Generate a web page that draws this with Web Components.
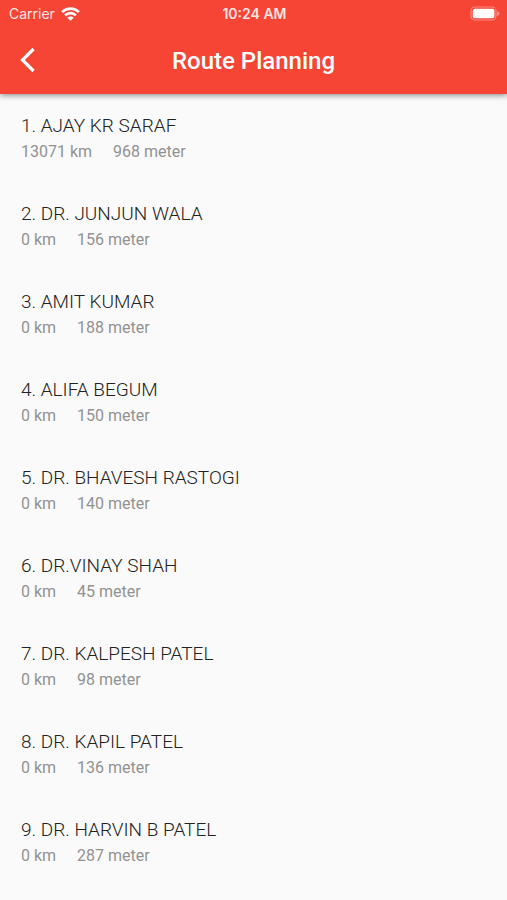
<!DOCTYPE html>
<html lang="en">
<head>
  <meta charset="utf-8">
  <meta name="viewport" content="width=device-width, initial-scale=1">
  <title>Route Planning</title>
  <style>
    body {
      margin: 0;
      background: #fafafa;
      font-family: Roboto, "Liberation Sans", sans-serif;
    }
  </style>
</head>
<body>
  <route-app>
    <status-bar slot="header" carrier="Carrier" time="10:24 AM"></status-bar>
    <nav-bar slot="header">Route Planning</nav-bar>
    <route-stop km="13071" meter="968">1. AJAY KR SARAF</route-stop>
    <route-stop km="0" meter="156">2. DR. JUNJUN WALA</route-stop>
    <route-stop km="0" meter="188">3. AMIT KUMAR</route-stop>
    <route-stop km="0" meter="150">4. ALIFA BEGUM</route-stop>
    <route-stop km="0" meter="140">5. DR. BHAVESH RASTOGI</route-stop>
    <route-stop km="0" meter="45">6. DR.VINAY SHAH</route-stop>
    <route-stop km="0" meter="98">7. DR. KALPESH PATEL</route-stop>
    <route-stop km="0" meter="136">8. DR. KAPIL PATEL</route-stop>
    <route-stop km="0" meter="287">9. DR. HARVIN B PATEL</route-stop>
  </route-app>

  <script>
    const appTemplate = document.createElement('template');
    appTemplate.innerHTML = `
      <style>
      :host {
        display: block;
      }
      header {
        background: #f64435;
        color: #fff;
        box-shadow: 0 1px 6px rgba(0, 0, 0, 0.5);
      }
      main {
        padding: 19px 21px 0;
      }
      </style>
      <header><slot name='header'></slot></header>
      <main><slot></slot></main>
    `;

    class RouteApp extends HTMLElement {
      constructor() {
        super();
        this.attachShadow({ mode: 'open' });
        this.shadowRoot.appendChild(appTemplate.content.cloneNode(true));
      }
    }

    const statusTemplate = document.createElement('template');
    statusTemplate.innerHTML = `
      <style>
      :host {
        display: grid;
        grid-template-columns: 1fr auto 1fr;
        align-items: center;
        height: 27px;
        padding: 0 7px 0 9px;
        font-family: Inter, Roboto, sans-serif;
        font-size: 14px;
        line-height: 16px;
        color: #ffe4e1;
      }
      .left {
        display: flex;
        align-items: center;
        gap: 6px;
      }
      .time {
        font-weight: 600;
      }
      .battery {
        justify-self: end;
      }
      svg {
        display: block;
      }
      </style>
      <div class='left'>
        <span class='carrier'></span>
        <svg width='19' height='14' viewBox='0 0 19 14' aria-hidden='true'>
          <g fill='none' stroke='#fff' stroke-width='2.7'>
            <path d='M1.1 5.1 A11.9 11.9 0 0 1 17.9 5.1'/>
            <path d='M4.1 8.4 A7.6 7.6 0 0 1 14.9 8.4'/>
          </g>
          <path fill='#fff' d='M9.5 13.8 L6.3 10.8 A4.5 4.5 0 0 1 12.7 10.8 Z'/>
        </svg>
      </div>
      <span class='time'></span>
      <svg class='battery' width='30' height='15' viewBox='0 0 30 15' aria-hidden='true'>
        <rect x='1' y='1' width='25' height='13' rx='4' fill='none' stroke='#fb8a80' stroke-width='1.2'/>
        <rect x='2.8' y='2.8' width='21.6' height='9.4' rx='2' fill='#fff'/>
        <path fill='#fb9a90' d='M27.3 5 Q29.5 6 29.5 7.5 Q29.5 9 27.3 10 Z'/>
      </svg>
    `;

    class StatusBar extends HTMLElement {
      constructor() {
        super();
        this.attachShadow({ mode: 'open' });
        this.shadowRoot.appendChild(statusTemplate.content.cloneNode(true));
        this.shadowRoot.querySelector('.carrier').textContent =
          this.getAttribute('carrier');
        this.shadowRoot.querySelector('.time').textContent =
          this.getAttribute('time');
      }
    }

    const navTemplate = document.createElement('template');
    navTemplate.innerHTML = `
      <style>
      :host {
        display: grid;
        grid-template-columns: 56px 1fr 56px;
        align-items: center;
        height: 67px;
      }
      button {
        display: flex;
        align-items: center;
        justify-content: center;
        height: 56px;
        padding: 0 0 2px;
        border: 0;
        background: none;
        color: inherit;
        cursor: pointer;
      }
      h1 {
        margin: 0;
        text-align: center;
        font-size: 24px;
        font-weight: 500;
        line-height: 32px;
      }
      </style>
      <button type='button' aria-label='Back'>
        <svg width='16' height='26' viewBox='0 0 16 26' aria-hidden='true'>
          <path d='M13.5 2 L2.5 13 L13.5 24' fill='none' stroke='currentColor' stroke-width='3.2'/>
        </svg>
      </button>
      <h1><slot></slot></h1>
    `;

    class NavBar extends HTMLElement {
      constructor() {
        super();
        this.attachShadow({ mode: 'open' });
        this.shadowRoot.appendChild(navTemplate.content.cloneNode(true));
      }

      connectedCallback() {
        this.shadowRoot
          .querySelector('button')
          .addEventListener('click', () => history.back());
      }
    }

    const stopTemplate = document.createElement('template');
    stopTemplate.innerHTML = `
      <style>
      :host {
        display: block;
        margin-bottom: 37px;
      }
      h2 {
        margin: 0;
        color: #222;
        font-size: 19px;
        font-weight: 300;
        line-height: 26px;
      }
      .distance {
        display: flex;
        gap: 21px;
        color: #929292;
        font-size: 16px;
        line-height: 25px;
      }
      </style>
      <h2><slot></slot></h2>
      <div class='distance'>
        <span class='km'></span>
        <span class='meter'></span>
      </div>
    `;

    class RouteStop extends HTMLElement {
      constructor() {
        super();
        this.attachShadow({ mode: 'open' });
        this.shadowRoot.appendChild(stopTemplate.content.cloneNode(true));
        this.shadowRoot.querySelector('.km').textContent =
          `${this.getAttribute('km')} km`;
        this.shadowRoot.querySelector('.meter').textContent =
          `${this.getAttribute('meter')} meter`;
      }
    }

    window.customElements.define('route-app', RouteApp);
    window.customElements.define('status-bar', StatusBar);
    window.customElements.define('nav-bar', NavBar);
    window.customElements.define('route-stop', RouteStop);
  </script>
</body>
</html>
